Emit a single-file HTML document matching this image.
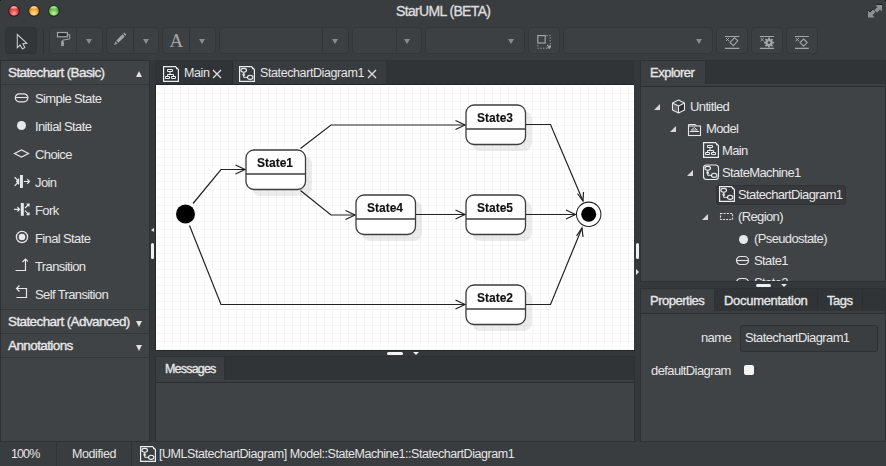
<!DOCTYPE html>
<html><head><meta charset="utf-8">
<style>
*{box-sizing:border-box;margin:0;padding:0}
html,body{width:886px;height:466px;overflow:hidden;background:#3a3d40;font-family:"Liberation Sans",sans-serif;color:#e6e6e6}
.a{position:absolute}
.t{position:absolute;white-space:nowrap;font-size:13px;letter-spacing:-0.62px;line-height:1}
.b{font-weight:normal;-webkit-text-stroke:0.35px currentColor}
.btn{position:absolute;top:27px;height:27px;border:1px solid #34373a;border-radius:4px;background:#3d4043}
.dd{position:absolute;top:0;bottom:0;border-left:1px solid #34373a}
.tri{position:absolute;width:0;height:0;border-left:5px solid transparent;border-right:5px solid transparent;border-top:7px solid #8a8d90}
.panel{position:absolute;background:#404346;border:1px solid #2e3134}
</style></head><body>
<svg width="0" height="0" style="position:absolute"><defs>
<symbol id="doc" viewBox="0 0 17 17"><path d="M0.6 0.6 H12.5 L15.4 3.5 V15.4 H0.6 Z" fill="none" stroke="#ebeeee" stroke-width="1.2"/><rect x="13" y="2" width="1.2" height="1.2" fill="#ebeeee"/></symbol>
<symbol id="ic-main" viewBox="0 0 17 17"><use href="#doc"/><path d="M4.5 3.5 H9.5 V5.5 H4.5 Z M7 5.5 V8.5 M4.5 8.5 H10.5 M4.5 8.5 V10.5 M10.5 8.5 V10.5 M2.5 10.5 H6.5 V12.5 H2.5 Z M8.5 10.5 H12.5 V12.5 H8.5 Z" fill="none" stroke="#ebeeee" stroke-width="1"/></symbol>
<symbol id="ic-sc-in" viewBox="0 0 17 17"><ellipse cx="4.7" cy="4.3" rx="2.8" ry="1.9" fill="none" stroke="#ebeeee" stroke-width="1.15"/><path d="M4.7 6.2 V11.3 H8.4 M3.3 8.2 H6.1 M3.5 9.2 H5.9" fill="none" stroke="#ebeeee" stroke-width="1"/><ellipse cx="11.2" cy="11.3" rx="2.7" ry="2.1" fill="none" stroke="#ebeeee" stroke-width="1.15"/></symbol>
<symbol id="ic-sc" viewBox="0 0 17 17"><use href="#doc"/><use href="#ic-sc-in"/></symbol>
<symbol id="ic-sm" viewBox="0 0 17 17"><rect x="0.5" y="1" width="15" height="14.5" rx="3" fill="none" stroke="#ebeeee" stroke-width="1.1"/><use href="#ic-sc-in"/></symbol>
</defs></svg>

<!-- title bar -->
<svg class="a" style="left:0;top:0" width="64" height="24" viewBox="0 0 64 24">
<defs>
<radialGradient id="gr" cx="50%" cy="75%" r="60%"><stop offset="0" stop-color="#f7a9a6"/><stop offset="0.6" stop-color="#e5484a"/><stop offset="1" stop-color="#c9302f"/></radialGradient>
<radialGradient id="go" cx="50%" cy="75%" r="60%"><stop offset="0" stop-color="#ffe3a0"/><stop offset="0.6" stop-color="#f2a83c"/><stop offset="1" stop-color="#d68a1c"/></radialGradient>
<radialGradient id="gg" cx="50%" cy="75%" r="60%"><stop offset="0" stop-color="#c8f0a8"/><stop offset="0.6" stop-color="#72c250"/><stop offset="1" stop-color="#4e9e34"/></radialGradient>
<linearGradient id="hl" x1="0" y1="0" x2="0" y2="1"><stop offset="0" stop-color="#fff" stop-opacity="0.85"/><stop offset="1" stop-color="#fff" stop-opacity="0"/></linearGradient>
</defs>
<circle cx="14" cy="11.3" r="5.8" fill="#000" opacity="0.25"/>
<circle cx="34" cy="11.3" r="5.8" fill="#000" opacity="0.25"/>
<circle cx="53.8" cy="11.3" r="5.8" fill="#000" opacity="0.25"/>
<circle cx="14" cy="10.8" r="5.3" fill="url(#gr)" stroke="#2a1a1a" stroke-width="0.9"/>
<circle cx="34" cy="10.8" r="5.3" fill="url(#go)" stroke="#2a2010" stroke-width="0.9"/>
<circle cx="53.8" cy="10.8" r="5.3" fill="url(#gg)" stroke="#142a10" stroke-width="0.9"/>
<ellipse cx="14" cy="8" rx="3" ry="1.8" fill="url(#hl)"/>
<ellipse cx="34" cy="8" rx="3" ry="1.8" fill="url(#hl)"/>
<ellipse cx="53.8" cy="8" rx="3" ry="1.8" fill="url(#hl)"/>
</svg>
<svg class="a" style="left:864px;top:2px" width="22" height="20" viewBox="864 2 22 20">
<path d="M875.5 5 H882 V11.5 L880 9.5 L877 12.5 L874.5 10 L877.5 7 Z" fill="#8e9193"/>
<path d="M868 10.5 L870 12.5 L873 9.5 L875.5 12 L872.5 15 L874.5 17.5 H868 Z" fill="#8e9193"/>
<path d="M875.5 4.5 H882.5" stroke="#1e2022" stroke-width="1"/>
<path d="M868 10 L870 12 L873 9" stroke="#1e2022" stroke-width="0.9" fill="none"/>
</svg>
<div class="t b" style="left:396px;top:4px;font-size:14px;letter-spacing:-0.65px;color:#dcdcdc">StarUML (BETA)</div>

<!-- toolbar -->
<div class="btn" style="left:5px;width:32px;background:#333639;border-color:#303336"></div>
<svg class="a" style="left:14px;top:32px" width="16" height="20" viewBox="14 32 16 20"><path d="M17.3 34.5 L26.8 43.3 L22.9 43.8 L24.8 47.6 L22.4 49 L20.1 45 L17.3 47.7 Z" fill="#2f3234" stroke="#c4c8ca" stroke-width="1.1" stroke-linejoin="miter"/></svg>
<div class="a" style="left:43px;top:29px;width:1px;height:25px;background:#303336"></div>
<div class="btn" style="left:49px;width:54px"><div class="dd" style="left:26px"></div></div>
<svg class="a" style="left:55px;top:30px" width="18" height="18" viewBox="55 30 18 18"><rect x="57.5" y="32.5" width="9.8" height="4.3" fill="#2b2e30" stroke="#a3a6a8" stroke-width="1.2"/><path d="M67.3 34.6 H69.7 V38.9 L62.4 40.3 V42" fill="none" stroke="#a3a6a8" stroke-width="1"/><rect x="61.2" y="41.2" width="2.6" height="4.9" fill="#a3a6a8"/></svg>
<div class="tri" style="left:86px;top:39px;border-left-width:3.5px;border-right-width:3.5px;border-top-width:5.5px"></div>
<div class="btn" style="left:106px;width:53px"><div class="dd" style="left:26px"></div></div>
<svg class="a" style="left:112px;top:31px" width="16" height="16" viewBox="112 31 16 16"><path d="M114 44.9 L115.5 41.4 L117.6 43.5 Z" fill="#a3a6a8"/><path d="M116.3 40.6 L122.6 34.3 L124.7 36.4 L118.4 42.7 Z" fill="#a3a6a8"/><path d="M123.3 33.6 L124.3 32.6 L126.4 34.7 L125.4 35.7 Z" fill="#a3a6a8"/></svg>
<div class="tri" style="left:143px;top:39px;border-left-width:3.5px;border-right-width:3.5px;border-top-width:5.5px"></div>
<div class="btn" style="left:162px;width:54px"><div class="dd" style="left:26px"></div></div>
<div class="t" style="left:169.5px;top:31px;font-family:'Liberation Serif',serif;font-size:19px;letter-spacing:0;color:#a3a6a8">A</div>
<div class="tri" style="left:199px;top:39px;border-left-width:3.5px;border-right-width:3.5px;border-top-width:5.5px"></div>
<div class="btn" style="left:219px;width:130px"><div class="dd" style="left:102px"></div></div>
<div class="tri" style="left:332px;top:39px;border-left-width:3.5px;border-right-width:3.5px;border-top-width:5.5px"></div>
<div class="btn" style="left:352px;width:70px"><div class="dd" style="left:43px"></div></div>
<div class="tri" style="left:404px;top:39px;border-left-width:3.5px;border-right-width:3.5px;border-top-width:5.5px"></div>
<div class="btn" style="left:425px;width:100px"></div>
<div class="tri" style="left:508px;top:39px;border-left-width:3.5px;border-right-width:3.5px;border-top-width:5.5px"></div>
<div class="btn" style="left:528px;width:32px"></div>
<svg class="a" style="left:534px;top:32px" width="20" height="20" viewBox="534 32 20 20"><rect x="537.8" y="35.6" width="7.4" height="7.4" fill="none" stroke="#a3a6a8" stroke-width="1.2"/><path d="M546.5 35.6 H550.3 V48.2 H537.8 V44.5" fill="none" stroke="#a3a6a8" stroke-width="1" stroke-dasharray="1.2 1.6"/><path d="M547 44.8 L550 47.8 M547.2 47.8 H550 V45" fill="none" stroke="#a3a6a8" stroke-width="1.1"/></svg>
<div class="btn" style="left:563px;width:150px"></div>
<div class="tri" style="left:696px;top:39px;border-left-width:3.5px;border-right-width:3.5px;border-top-width:5.5px"></div>
<div class="btn" style="left:716px;width:32px"></div>
<svg class="a" style="left:720px;top:32px" width="24" height="20" viewBox="720 32 24 20"><path d="M724.9 36.5 H739.3 M724.9 48.4 H739.3" stroke="#a3a6a8" stroke-width="1.2"/><path d="M726 38 L729 41 M729 38 L726 41" stroke="#a3a6a8" stroke-width="1"/><path d="M730 42.5 L734.5 37.7 L737.8 40.8 L733.3 45.6 Z" fill="none" stroke="#a3a6a8" stroke-width="1.1"/></svg>
<div class="btn" style="left:751px;width:32px"></div>
<svg class="a" style="left:756px;top:32px" width="24" height="20" viewBox="756 32 24 20"><path d="M759.9 36.5 H774.1 M759.9 48.3 H774.1" stroke="#a3a6a8" stroke-width="1.2"/><path d="M760.5 38 L763.8 41.2 M763.8 38 L760.5 41.2" stroke="#a3a6a8" stroke-width="1"/><circle cx="769" cy="42.6" r="3.6" fill="#a3a6a8"/><g stroke="#a3a6a8" stroke-width="1.8"><path d="M769 37.6 V47.6 M764 42.6 H774 M765.5 39.1 L772.5 46.1 M772.5 39.1 L765.5 46.1"/></g><circle cx="769" cy="42.6" r="1.3" fill="#3d4043"/></svg>
<div class="btn" style="left:786px;width:32px"></div>
<svg class="a" style="left:790px;top:32px" width="24" height="20" viewBox="790 32 24 20"><path d="M795 36.5 H808.8 M795 48.3 H808.8" stroke="#a3a6a8" stroke-width="1.2"/><path d="M795.6 38 L799 41.2 M799 38 L795.6 41.2" stroke="#a3a6a8" stroke-width="1"/><path d="M803.6 39 L807.2 42.6 L803.6 46.2 L800 42.6 Z" fill="none" stroke="#a3a6a8" stroke-width="1.1"/></svg>

<!-- left panel -->
<div class="panel" style="left:0;top:60px;width:150px;height:382px"></div>
<div class="a" style="left:1px;top:84px;width:148px;height:1px;background:#34373a"></div>
<div class="t b" style="left:8px;top:66px;font-size:13.5px;letter-spacing:-0.6px;color:#e8e8e8">Statechart (Basic)</div>
<div class="a" style="left:135.5px;top:71px;width:0;height:0;border-left:3.5px solid transparent;border-right:3.5px solid transparent;border-bottom:6px solid #e0e0e0"></div>
<svg class="a" style="left:14px;top:92px" width="16" height="12" viewBox="0 0 16 12"><rect x="1.3" y="1.8" width="12.6" height="8" rx="4" fill="none" stroke="#e6e6e6" stroke-width="1.2"/><line x1="1.5" y1="5.5" x2="13.5" y2="5.5" stroke="#e6e6e6" stroke-width="1.1"/></svg>
<div class="t" style="left:35px;top:92px">Simple State</div>
<div class="a" style="left:17px;top:121px;width:9px;height:9px;border-radius:50%;background:#e6e9ea"></div>
<div class="t" style="left:35px;top:120px">Initial State</div>
<svg class="a" style="left:13px;top:149px" width="18" height="10" viewBox="0 0 18 10"><path d="M1.5 4.5 L8.5 1 L15.5 4.5 L8.5 8 Z" fill="none" stroke="#e6e6e6" stroke-width="1.2"/></svg>
<div class="t" style="left:35px;top:148px">Choice</div>
<svg class="a" style="left:10px;top:172px" width="24" height="20" viewBox="10 172 24 20"><rect x="20" y="175" width="2.9" height="13" fill="#e6e9ea"/><path d="M23.9 181.5 H29.4 M27.2 179.2 L29.5 181.5 L27.2 183.8 M14.6 177.2 L18.6 181 M16.2 181 H18.6 V178.6 M14.6 185.9 L18.6 182 M16.2 182 H18.6 V184.4" fill="none" stroke="#e6e9ea" stroke-width="1.2"/></svg>
<div class="t" style="left:35px;top:176px">Join</div>
<svg class="a" style="left:10px;top:200px" width="24" height="20" viewBox="10 200 24 20"><rect x="20.8" y="203" width="3" height="12.8" fill="#e6e9ea"/><path d="M14.1 209.3 H19.6 M17.4 207.1 L19.6 209.3 L17.4 211.5 M25 208 L29 204 M26.6 204 H29 V206.4 M25 210.6 L29 214.6 M26.6 214.6 H29 V212.2" fill="none" stroke="#e6e9ea" stroke-width="1.2"/></svg>
<div class="t" style="left:35px;top:204px">Fork</div>
<svg class="a" style="left:15px;top:230px" width="14" height="14" viewBox="0 0 14 14"><circle cx="7" cy="7" r="5.6" fill="none" stroke="#e6e6e6" stroke-width="1.3"/><circle cx="7" cy="7" r="3.3" fill="#e6e9ea"/></svg>
<div class="t" style="left:35px;top:232px">Final State</div>
<svg class="a" style="left:14px;top:257px" width="14" height="15" viewBox="0 0 14 15"><path d="M1.5 13.5 L11.5 13.5 L11.5 2 M8.5 5 L11.5 2 L14.5 5" fill="none" stroke="#e6e6e6" stroke-width="1.2"/></svg>
<div class="t" style="left:35px;top:260px">Transition</div>
<svg class="a" style="left:14px;top:285px" width="14" height="15" viewBox="0 0 14 15"><path d="M2.5 3.5 L12.5 3.5 L12.5 12.5 L2.5 12.5 M5.5 0.5 L2.5 3.5 L5.5 6.5" fill="none" stroke="#e6e6e6" stroke-width="1.2"/></svg>
<div class="t" style="left:35px;top:288px">Self Transition</div>
<div class="a" style="left:1px;top:309px;width:148px;height:1px;background:#34373a"></div>
<div class="t b" style="left:8px;top:315px;font-size:13.5px;letter-spacing:-0.6px;color:#e8e8e8">Statechart (Advanced)</div>
<div class="a" style="left:135.5px;top:321px;width:0;height:0;border-left:3.5px solid transparent;border-right:3.5px solid transparent;border-top:6px solid #e0e0e0"></div>
<div class="a" style="left:1px;top:333px;width:148px;height:1px;background:#34373a"></div>
<div class="t b" style="left:8px;top:339px;font-size:13.5px;letter-spacing:-0.6px;color:#e8e8e8">Annotations</div>
<div class="a" style="left:135.5px;top:345px;width:0;height:0;border-left:3.5px solid transparent;border-right:3.5px solid transparent;border-top:6px solid #e0e0e0"></div>
<div class="a" style="left:1px;top:357px;width:148px;height:1px;background:#34373a"></div>

<!-- splitter strips -->
<div class="a" style="left:150px;top:60px;width:6px;height:382px;background:#35383b"></div>
<div class="a" style="left:634px;top:60px;width:6px;height:382px;background:#35383b"></div>
<div class="a" style="left:151px;top:228px;width:0;height:0;border-top:2.5px solid transparent;border-bottom:2.5px solid transparent;border-right:3.5px solid #e6e6e6"></div>
<div class="a" style="left:151px;top:243px;width:3px;height:16px;border-radius:2px;background:#f0f0f0"></div>
<div class="a" style="left:636px;top:243px;width:3px;height:16px;border-radius:2px;background:#f0f0f0"></div>
<div class="a" style="left:636px;top:269px;width:0;height:0;border-top:3px solid transparent;border-bottom:3px solid transparent;border-left:3.5px solid #e6e6e6"></div>
<!-- center tabs -->
<div class="a" style="left:155px;top:60px;width:479px;height:25px;background:#313436;border-bottom:1px solid #25282a"></div>
<div class="a" style="left:232px;top:61px;width:154px;height:23px;background:#393c3f;border-left:1px solid #2a2d2f"></div>
<svg class="a" style="left:163px;top:66px" width="17" height="17"><use href="#ic-main"/></svg>
<div class="t" style="left:184px;top:67px;font-size:12.5px;letter-spacing:-0.4px">Main</div>
<svg class="a" style="left:212px;top:69px" width="10" height="10" viewBox="0 0 10 10"><path d="M1 1 L9 9 M9 1 L1 9" stroke="#e0e0e0" stroke-width="1.3"/></svg>
<svg class="a" style="left:239px;top:66px" width="17" height="17"><use href="#ic-sc"/></svg>
<div class="t" style="left:260px;top:67px;font-size:12.5px;letter-spacing:-0.4px">StatechartDiagram1</div>
<svg class="a" style="left:367px;top:69px" width="10" height="10" viewBox="0 0 10 10"><path d="M1 1 L9 9 M9 1 L1 9" stroke="#e0e0e0" stroke-width="1.3"/></svg>
<!-- canvas -->
<div class="a" style="left:156px;top:85px;width:478px;height:265px;background-color:#fff;background-image:linear-gradient(to right,#f6f6f6 1px,transparent 1px),linear-gradient(to bottom,#f6f6f6 1px,transparent 1px);background-size:8px 8px;background-position:0 0"></div>
<div class="a" style="left:156px;top:85px;width:478px;height:1px;background:#fff"></div>
<div class="a" style="left:156px;top:85px;width:1px;height:265px;background:#fff"></div>
<svg class="a" style="left:156px;top:85px" width="478" height="265" viewBox="156 85 478 265">
<defs><filter id="sh" x="-20%" y="-20%" width="150%" height="150%"><feGaussianBlur stdDeviation="0.7"/></filter></defs>
<g fill="#000" opacity="0.075">
<rect x="252.0" y="156.0" width="60" height="40" rx="8" filter="url(#sh)"/>
<rect x="472.0" y="111.0" width="60" height="40" rx="8" filter="url(#sh)"/>
<rect x="362.0" y="201.0" width="60" height="40" rx="8" filter="url(#sh)"/>
<rect x="472.0" y="201.0" width="60" height="40" rx="8" filter="url(#sh)"/>
<rect x="472.0" y="291.0" width="60" height="40" rx="8" filter="url(#sh)"/>
</g>
<g fill="#fff" stroke="#3c3c3c" stroke-width="1.3">
<rect x="246" y="150" width="59.5" height="39.5" rx="8"/>
<rect x="466" y="105" width="59.5" height="39.5" rx="8"/>
<rect x="356" y="195" width="59.5" height="39.5" rx="8"/>
<rect x="466" y="195" width="59.5" height="39.5" rx="8"/>
<rect x="466" y="285" width="59.5" height="39.5" rx="8"/>
</g>
<g stroke="#3c3c3c" stroke-width="1.3">
<line x1="246" y1="174" x2="305.5" y2="174"/>
<line x1="466" y1="129" x2="525.5" y2="129"/>
<line x1="356" y1="219" x2="415.5" y2="219"/>
<line x1="466" y1="219" x2="525.5" y2="219"/>
<line x1="466" y1="309" x2="525.5" y2="309"/>
</g>
<g font-family="Liberation Sans" font-weight="bold" font-size="12" fill="#111" stroke="#111" stroke-width="0.12" text-anchor="middle">
<text x="275" y="167">State1</text>
<text x="495" y="122">State3</text>
<text x="385" y="212">State4</text>
<text x="495" y="212">State5</text>
<text x="495" y="302">State2</text>
</g>
<g fill="none" stroke="#222" stroke-width="1.2">
<polyline points="193,203.5 221,169.5 245,169.5"/>
<polyline points="235.5,165 245,169.5 235.5,174"/>
<polyline points="300.5,148.5 331,125 465,125"/>
<polyline points="455.5,120.5 465,125 455.5,129.5"/>
<polyline points="300.5,190.5 331,215 355,215"/>
<polyline points="345.5,210.5 355,215 345.5,219.5"/>
<polyline points="416,214.5 465,214.5"/>
<polyline points="455.5,210 465,214.5 455.5,219"/>
<polyline points="526,214.5 575.5,214.5"/>
<polyline points="566,210 575.5,214.5 566,219"/>
<polyline points="526,124.5 550.5,124.5 583,201"/>
<polyline points="577.5,193.5 583,201 583.5,192"/>
<polyline points="189.5,225.5 221,304.5 465,304.5"/>
<polyline points="455.5,300 465,304.5 455.5,309"/>
<polyline points="526,304.5 550.5,304.5 582,228"/>
<polyline points="576.5,236 582,228 583,237"/>
</g>
<circle cx="185.5" cy="214" r="9.5" fill="#000"/>
<circle cx="588.7" cy="214.3" r="12.2" fill="#fff" stroke="#222" stroke-width="1.05"/>
<circle cx="588.7" cy="214.3" r="7.5" fill="#000"/>
</svg>
<!-- canvas border + bottom splitter -->
<div class="a" style="left:155px;top:85px;width:1px;height:265px;background:#25282a"></div>
<div class="a" style="left:155px;top:350px;width:480px;height:6px;background:#35383b;border-top:1px solid #25282a"></div>
<div class="a" style="left:387px;top:352px;width:16px;height:3px;border-radius:2px;background:#f4f4f4"></div>
<div class="a" style="left:413px;top:352px;width:0;height:0;border-left:3px solid transparent;border-right:3px solid transparent;border-top:3.5px solid #f0f0f0"></div>

<!-- messages -->
<div class="panel" style="left:155px;top:356px;width:480px;height:86px"></div>
<div class="a" style="left:156px;top:357px;width:478px;height:26px;background:#3c3f42;border-bottom:1px solid #2b2e30"></div>
<div class="a" style="left:224px;top:357px;width:410px;height:23px;background:#313436;border-left:1px solid #2e3133"></div>
<div class="t b" style="left:165px;top:363px;font-size:12.5px;letter-spacing:-0.8px">Messages</div>

<!-- right explorer -->
<div class="panel" style="left:640px;top:60px;width:246px;height:222px"></div>
<div class="a" style="left:641px;top:61px;width:244px;height:26px;background:#3c3f42;border-bottom:1px solid #2b2e30"></div>
<div class="a" style="left:705px;top:61px;width:180px;height:23px;background:#313436;border-left:1px solid #2e3133"></div>
<div class="t b" style="left:650px;top:66px;font-size:13px;letter-spacing:-0.5px">Explorer</div>
<div class="a" style="left:654px;top:104px;width:0;height:0;border-left:6px solid transparent;border-bottom:6px solid #d8d8d8"></div>
<svg class="a" style="left:671px;top:99px" width="15" height="15" viewBox="0 0 15 15"><path d="M7.5 7 L13.5 4 V11 L7.5 14 Z" fill="#2a2c2e"/><path d="M7.5 7 L1.5 4 V11 L7.5 14 Z" fill="#5f6264"/><path d="M7.5 1 L13.5 4 L7.5 7 L1.5 4 Z" fill="#3c3e41"/><path d="M7.5 1 L13.5 4 V11 L7.5 14 L1.5 11 V4 Z M1.5 4 L7.5 7 L13.5 4 M7.5 7 V14" fill="none" stroke="#e6e6e6" stroke-width="1.1" stroke-linejoin="round"/></svg>
<div class="t" style="left:690px;top:100px">Untitled</div>
<div class="a" style="left:670px;top:126px;width:0;height:0;border-left:6px solid transparent;border-bottom:6px solid #d8d8d8"></div>
<svg class="a" style="left:687px;top:122px" width="15" height="15" viewBox="0 0 15 15"><path d="M1.5 4 V2.5 H8.5 L9.5 4" fill="none" stroke="#e6e6e6" stroke-width="1"/><rect x="1.5" y="4" width="12" height="9.5" fill="none" stroke="#e6e6e6" stroke-width="1.1"/><path d="M4.3 8 L7.3 5.5 L10.3 8 Z" fill="none" stroke="#e6e6e6" stroke-width="0.9"/><path d="M2.8 9.5 H12.2" stroke="#e6e6e6" stroke-width="1"/></svg>
<div class="t" style="left:706px;top:122px">Model</div>
<svg class="a" style="left:703px;top:142px" width="17" height="17"><use href="#ic-main"/></svg>
<div class="t" style="left:722px;top:144px">Main</div>
<div class="a" style="left:687px;top:170px;width:0;height:0;border-left:6px solid transparent;border-bottom:6px solid #d8d8d8"></div>
<svg class="a" style="left:703px;top:164px" width="17" height="17"><use href="#ic-sm"/></svg>
<div class="t" style="left:722px;top:166px">StateMachine1</div>
<div class="a" style="left:716px;top:185px;width:130px;height:20px;border-radius:3px;background:#37393c;border:1px solid #303235"></div>
<svg class="a" style="left:719px;top:186px" width="17" height="17"><use href="#ic-sc"/></svg>
<div class="t" style="left:738px;top:188px">StatechartDiagram1</div>
<div class="a" style="left:702px;top:214px;width:0;height:0;border-left:6px solid transparent;border-bottom:6px solid #d8d8d8"></div>
<svg class="a" style="left:719px;top:211px" width="15" height="12" viewBox="0 0 15 12"><rect x="1.5" y="2.5" width="12" height="6" fill="none" stroke="#e6e6e6" stroke-width="1.1" stroke-dasharray="2 1.2"/></svg>
<div class="t" style="left:738px;top:210px">(Region)</div>
<div class="a" style="left:739px;top:235px;width:9px;height:9px;border-radius:50%;background:#e6e9ea"></div>
<div class="t" style="left:754px;top:232px">(Pseudostate)</div>
<svg class="a" style="left:735px;top:255px" width="16" height="12" viewBox="0 0 16 12"><rect x="1.5" y="1.5" width="12" height="8" rx="4" fill="none" stroke="#e6e6e6" stroke-width="1.2"/><line x1="1.5" y1="5.5" x2="13.5" y2="5.5" stroke="#e6e6e6" stroke-width="1.1"/></svg>
<div class="t" style="left:754px;top:254px">State1</div>
<div class="a" style="left:641px;top:276px;width:244px;height:5px;overflow:hidden"><svg class="a" style="left:94px;top:1px" width="16" height="12" viewBox="0 0 16 12"><rect x="1.5" y="1.5" width="12" height="8" rx="4" fill="none" stroke="#e6e6e6" stroke-width="1.2"/></svg><div class="t" style="left:113px;top:0px">State2</div></div>
<div class="a" style="left:640px;top:282px;width:246px;height:6px;background:#35383b"></div>
<div class="a" style="left:756px;top:284px;width:15px;height:3px;border-radius:2px;background:#f0f0f0"></div>
<div class="a" style="left:781px;top:284px;width:0;height:0;border-left:3px solid transparent;border-right:3px solid transparent;border-top:3.5px solid #e6e6e6"></div>
<!-- properties -->
<div class="panel" style="left:640px;top:288px;width:246px;height:154px"></div>
<div class="a" style="left:641px;top:289px;width:244px;height:25px;background:#3c3f42;border-bottom:1px solid #2b2e30"></div>
<div class="a" style="left:714px;top:289px;width:171px;height:22px;background:#313436;border-left:1px solid #2e3133"></div>
<div class="a" style="left:817px;top:289px;width:1px;height:22px;background:#2c2f31"></div>
<div class="a" style="left:862px;top:289px;width:1px;height:22px;background:#2c2f31"></div>
<div class="t b" style="left:650px;top:294px;font-size:13px;letter-spacing:-0.5px">Properties</div>
<div class="t b" style="left:724px;top:294px;font-size:13px;letter-spacing:-0.3px">Documentation</div>
<div class="t b" style="left:827px;top:294px;font-size:13px;letter-spacing:-0.5px">Tags</div>
<div class="t" style="left:690px;top:331px;width:41px;text-align:right">name</div>
<div class="a" style="left:740px;top:325px;width:138px;height:27px;border-radius:3px;background:#3b3e41;border:1px solid #2d3032"></div>
<div class="t" style="left:745px;top:331px">StatechartDiagram1</div>
<div class="t" style="left:651px;top:364px;letter-spacing:-0.6px">defaultDiagram</div>
<div class="a" style="left:744px;top:365px;width:10px;height:10px;border-radius:2px;background:#f4f4f4"></div>
<!-- status -->
<div class="a" style="left:56px;top:442px;width:1px;height:24px;background:#303335"></div>
<div class="a" style="left:131px;top:442px;width:1px;height:24px;background:#303335"></div>
<svg class="a" style="left:140px;top:446px" width="17" height="17"><use href="#ic-sc"/></svg>
<div class="t" style="left:159px;top:448px;font-size:12.5px;letter-spacing:-0.45px">[UMLStatechartDiagram] Model::StateMachine1::StatechartDiagram1</div>

<!-- status bar -->
<div class="t" style="left:11px;top:448px;font-size:12.5px;letter-spacing:-0.9px">100%</div>
<div class="t" style="left:72px;top:448px;font-size:12.5px;letter-spacing:-0.4px">Modified</div>
<div class="a" style="left:0;top:0;width:1px;height:1px;background:#111"></div><div class="a" style="left:885px;top:0;width:1px;height:1px;background:#111"></div>
</body></html>
